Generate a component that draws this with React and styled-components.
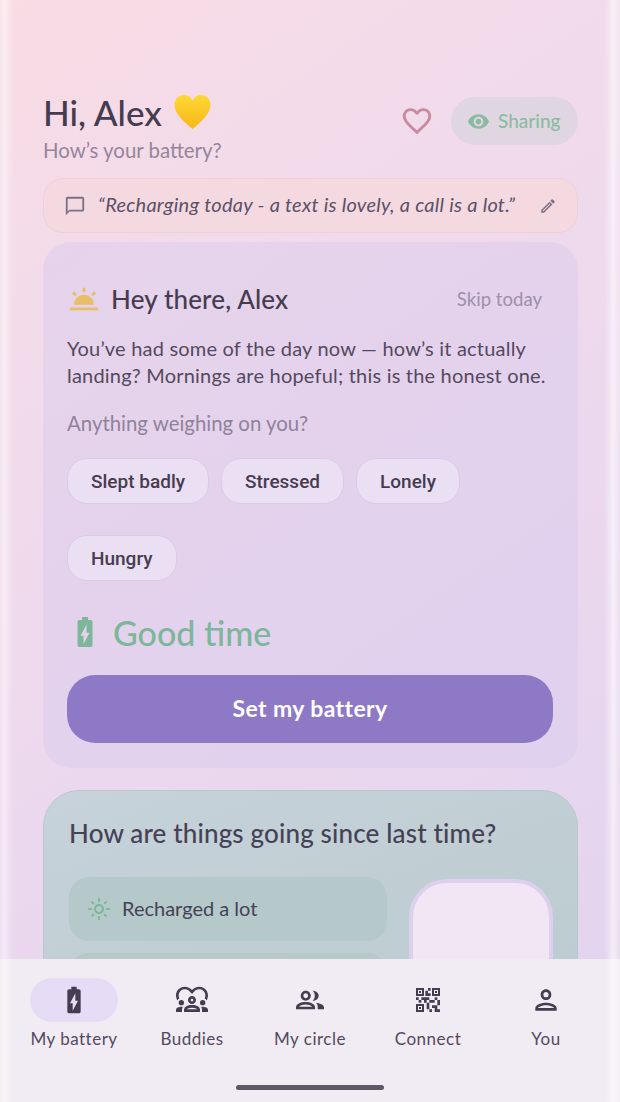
import React from 'react'
import styled, { createGlobalStyle } from 'styled-components'
import {
  MdFavoriteBorder,
  MdVisibility,
  MdOutlineChatBubbleOutline,
  MdOutlineEdit,
  MdWbTwilight,
  MdBatteryChargingFull,
  MdOutlineLightMode,
  MdOutlineDiversity1,
  MdOutlineQrCode2,
  MdOutlinePerson,
} from 'react-icons/md'

const GlobalStyle = createGlobalStyle`
  html, body {
    margin: 0;
    padding: 0;
    width: 620px;
    height: 1102px;
    overflow: hidden;
    font-family: "Lato", "Noto Sans", sans-serif;
  }
  * { box-sizing: border-box; }
`

const Phone = styled.div`
  position: relative;
  width: 620px;
  height: 1102px;
  display: flex;
  flex-direction: column;
  overflow: hidden;
  color: #463c50;
  background: linear-gradient(145deg, #f9dce4 0%, #f3dbe9 20%, #ecd8ee 55%, #e0d3ef 100%);

  &::after {
    content: '';
    position: absolute;
    inset: 0;
    pointer-events: none;
    background: linear-gradient(
      90deg,
      rgba(255, 255, 255, 0.2) 0,
      rgba(255, 255, 255, 0.5) 4px,
      rgba(255, 255, 255, 0.25) 8px,
      rgba(255, 255, 255, 0) 14px,
      rgba(255, 255, 255, 0) 604px,
      rgba(255, 255, 255, 0.2) 608px,
      rgba(255, 255, 255, 0.6) 613px,
      rgba(255, 255, 255, 0.2) 620px
    );
  }
`

const Scroll = styled.main`
  flex: 1;
  min-height: 0;
  overflow: hidden;
  padding: 91px 42px 0 43px;
`

const Header = styled.header`
  display: flex;
  justify-content: space-between;
  align-items: flex-start;
`

const Greeting = styled.div`
  display: flex;
  flex-direction: column;
`

const Title = styled.h1`
  margin: 0;
  display: flex;
  align-items: center;
  gap: 11px;
  height: 42px;
  font-size: 35px;
  font-weight: 500;
  color: #463c50;
`

const Subtitle = styled.div`
  margin-top: 4px;
  font-size: 20.4px;
  line-height: 26px;
  color: #94859c;
`

const HeaderActions = styled.div`
  display: flex;
  align-items: center;
  gap: 17px;
  margin-top: 6px;
  font-size: 32px;
  color: #c98a9f;
`

const SharingPill = styled.div`
  display: flex;
  align-items: center;
  gap: 8px;
  width: 127px;
  height: 48px;
  padding-left: 16px;
  border-radius: 24px;
  background: #e0d6e2;
  color: #8abba2;
  font-size: 19px;
  font-weight: 500;
`

const SharingLabel = styled.span`
  padding-bottom: 2px;
`

const StatusBox = styled.div`
  display: flex;
  align-items: center;
  height: 55px;
  margin-top: 15px;
  padding: 0 20px;
  border-radius: 20px;
  border: 1px solid #f2cfd8;
  background: #f4d9e1;
  color: #7b7084;
`

const StatusText = styled.span`
  flex: 1;
  margin-left: 12px;
  padding-bottom: 3px;
  font-size: 20px;
  letter-spacing: 0.25px;
  font-style: italic;
  color: #5c5166;
  white-space: nowrap;
`

const Card = styled.section`
  margin-top: 9px;
  padding: 25px 25px 25px 24px;
  border-radius: 28px;
  background: rgba(218, 203, 238, 0.5);
`

const CardHead = styled.div`
  display: flex;
  align-items: center;
  height: 64px;
  padding-right: 11px;
`

const CardTitle = styled.h2`
  flex: 1;
  margin: 0 0 0 10px;
  font-size: 26px;
  letter-spacing: 0.15px;
  font-weight: 500;
  color: #463c50;
`

const Skip = styled.span`
  font-size: 18.6px;
  color: #9d90a8;
`

const Body = styled.p`
  margin: 4px 0 0;
  font-size: 20px;
  letter-spacing: 0.2px;
  line-height: 27px;
  color: #54495e;
  white-space: nowrap;
`

const Question = styled.div`
  margin-top: 21px;
  font-size: 20.4px;
  line-height: 27px;
  color: #8f829b;
`

const Chips = styled.div`
  display: flex;
  flex-wrap: wrap;
  column-gap: 12px;
  row-gap: 31px;
  margin-top: 21px;
`

const Chip = styled.span`
  display: flex;
  align-items: center;
  height: 46px;
  padding: 0 23px;
  border-radius: 20px;
  border: 1px solid #d9cce9;
  background: #ebdff3;
  font-family: Roboto, sans-serif;
  font-size: 19px;
  font-weight: 500;
  color: #463c50;
`

const Level = styled.div`
  display: flex;
  align-items: center;
  height: 44px;
  margin-top: 29px;
  gap: 10px;
  font-size: 34px;
  font-weight: 500;
  color: #7db69a;
`

const PrimaryButton = styled.button`
  display: block;
  width: 100%;
  height: 68px;
  margin-top: 21px;
  padding: 0 0 3px;
  border: none;
  border-radius: 28px;
  background: #8d79c6;
  color: #fff;
  font-family: inherit;
  font-size: 23px;
  letter-spacing: 0.4px;
  font-weight: 700;
`

const CheckinCard = styled.section`
  margin-top: 22px;
  padding: 25px 25px 0;
  height: 300px;
  border-radius: 36px;
  border: 1px solid #b9c9c9;
  background: linear-gradient(160deg, #c7d2da 0%, #b8cacd 100%);
`

const CheckinTitle = styled.h2`
  margin: 0;
  font-size: 26px;
  letter-spacing: 0.15px;
  line-height: 34px;
  font-weight: 500;
  color: #454256;
`

const CheckinGrid = styled.div`
  display: grid;
  grid-template-columns: 318px 144px;
  column-gap: 22px;
  margin-top: 27px;
`

const Options = styled.div`
  display: flex;
  flex-direction: column;
  gap: 12px;
`

const Option = styled.div`
  display: flex;
  align-items: center;
  gap: 11px;
  height: 64px;
  padding-left: 18px;
  border-radius: 20px;
  background: #b5c9ca;
  font-size: 20px;
  color: #454256;
`

const OptionLabel = styled.span`
  padding-bottom: 3px;
`

const BatteryShell = styled.div`
  height: 200px;
  margin-top: 2px;
  border: 4px solid #dcd0ec;
  border-radius: 38px;
  background: #f3e6f4;
`

const Nav = styled.nav`
  flex: none;
  height: 143px;
  padding: 19px 15px 0;
  background: #f1ebf4;
  display: flex;
  flex-direction: column;
`

const NavItems = styled.div`
  display: grid;
  grid-template-columns: repeat(5, 118px);
`

const NavItem = styled.div`
  display: flex;
  flex-direction: column;
  align-items: center;
  font-size: 17px;
  letter-spacing: 0.5px;
  color: #544a5d;
`

const NavIcon = styled.div`
  display: flex;
  align-items: center;
  justify-content: center;
  width: 88px;
  height: 44px;
  border-radius: 22px;
  font-size: 32px;
  color: #463c50;
  background: ${(p) => (p.$active ? '#e6dcf6' : 'transparent')};
`

const NavLabel = styled.span`
  margin-top: 5px;
  line-height: 24px;
`

const HomeBar = styled.div`
  width: 148px;
  height: 5px;
  margin: 34px auto 0;
  border-radius: 3px;
  background: #5f5766;
`

const HeartEmoji = () => (
  <svg width="39" height="36" viewBox="0 0 40 38" aria-hidden="true">
    <defs>
      <linearGradient id="gold" x1="0" y1="0" x2="0" y2="1">
        <stop offset="0" stopColor="#fdd835" />
        <stop offset="1" stopColor="#f9b617" />
      </linearGradient>
    </defs>
    <path
      d="M20 37C12 30 1 21 1 11.500C1 5 6 1 11 1c4 0 7.500 2.500 9 6 1.500-3.500 5-6 9-6 5 0 10 4 10 10.500C39 21 28 30 20 37z"
      fill="url(#gold)"
    />
  </svg>
)

// the package's group icon is lighter than the one in the tab bar
const CircleIcon = () => (
  <svg width="1em" height="1em" viewBox="0 0 24 24" fill="currentColor" aria-hidden="true">
    <path
      fillRule="evenodd"
      d="M8.800 5a3.800 3.800 0 1 1 0 7.600 3.800 3.800 0 0 1 0-7.600zm0 2a1.800 1.800 0 1 0 0 3.600 1.800 1.800 0 0 0 0-3.600z"
    />
    <path d="M14 5c2.400 0 4.500 1.600 4.500 3.800S16.400 12.600 14 12.600c1-1 1.600-2.300 1.600-3.800S15 6 14 5z" />
    <path
      fillRule="evenodd"
      d="M1.500 19v-1.500c0-2.500 3.500-4 7.200-4s7.100 1.500 7.100 4V19zm2.300-2h9.800c-.8-1-2.900-1.600-4.900-1.600S4.600 16 3.800 17z"
    />
    <path d="M16.500 14c2.500.3 6 1.500 6 3.500V19h-4.700v-1.500c0-1.400-.3-2.600-1.300-3.500z" />
  </svg>
)

const navItems = [
  { label: 'My battery', Icon: MdBatteryChargingFull, active: true },
  { label: 'Buddies', Icon: MdOutlineDiversity1 },
  { label: 'My circle', Icon: CircleIcon },
  { label: 'Connect', Icon: MdOutlineQrCode2 },
  { label: 'You', Icon: MdOutlinePerson },
]

const chips = ['Slept badly', 'Stressed', 'Lonely', 'Hungry']

export default function App() {
  return (
    <Phone>
      <GlobalStyle />
      <Scroll>
        <Header>
          <Greeting>
            <Title>
              Hi, Alex <HeartEmoji />
            </Title>
            <Subtitle>How’s your battery?</Subtitle>
          </Greeting>
          <HeaderActions>
            <MdFavoriteBorder size={34} />
            <SharingPill>
              <MdVisibility size={23} />
              <SharingLabel>Sharing</SharingLabel>
            </SharingPill>
          </HeaderActions>
        </Header>

        <StatusBox>
          <MdOutlineChatBubbleOutline size={22} />
          <StatusText>“Recharging today - a text is lovely, a call is a lot.”</StatusText>
          <MdOutlineEdit size={18} />
        </StatusBox>

        <Card>
          <CardHead>
            <MdWbTwilight size={34} color="#e8bf67" />
            <CardTitle>Hey there, Alex</CardTitle>
            <Skip>Skip today</Skip>
          </CardHead>
          <Body>
            You’ve had some of the day now — how’s it actually
            <br />
            landing? Mornings are hopeful; this is the honest one.
          </Body>
          <Question>Anything weighing on you?</Question>
          <Chips>
            {chips.map((chip) => (
              <Chip key={chip}>{chip}</Chip>
            ))}
          </Chips>
          <Level>
            <MdBatteryChargingFull size={36} />
            Good time
          </Level>
          <PrimaryButton>Set my battery</PrimaryButton>
        </Card>

        <CheckinCard>
          <CheckinTitle>How are things going since last time?</CheckinTitle>
          <CheckinGrid>
            <Options>
              <Option>
                <MdOutlineLightMode size={24} color="#7db69a" />
                <OptionLabel>Recharged a lot</OptionLabel>
              </Option>
              <Option />
            </Options>
            <BatteryShell />
          </CheckinGrid>
        </CheckinCard>
      </Scroll>

      <Nav>
        <NavItems>
          {navItems.map(({ label, Icon, active }) => (
            <NavItem key={label}>
              <NavIcon $active={active}>
                <Icon />
              </NavIcon>
              <NavLabel>{label}</NavLabel>
            </NavItem>
          ))}
        </NavItems>
        <HomeBar />
      </Nav>
    </Phone>
  )
}
